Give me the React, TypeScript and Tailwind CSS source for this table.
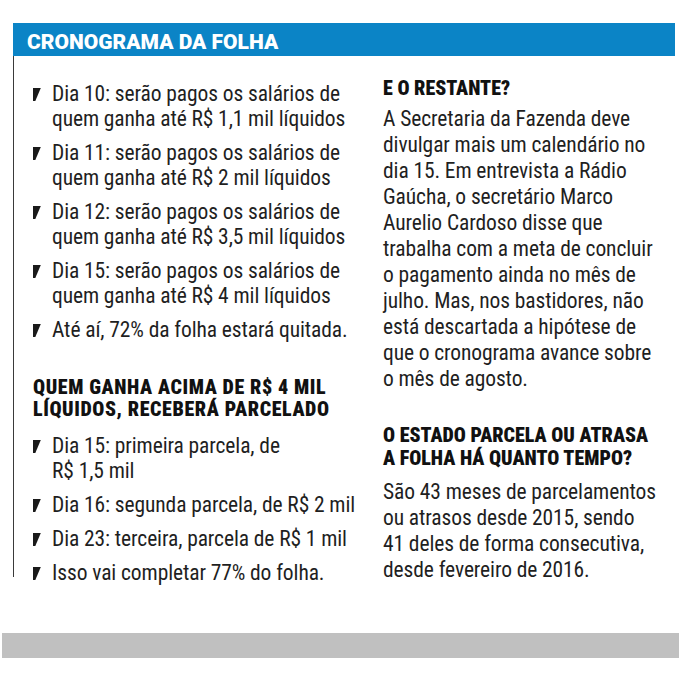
function Bullet() {
  return (
    <svg width="8" height="13" viewBox="0 0 8 13" className="mt-[7px] shrink-0" aria-hidden="true">
      <polygon points="0,0 7.8,0 2.3,13 0,13" fill="#1a1a1a" />
    </svg>
  );
}

function Item({ lines }: { lines: string[] }) {
  return (
    <li className="flex">
      <Bullet />
      <div className="ml-[11px] flex flex-col">
        {lines.map((l) => (
          <span key={l} className="block whitespace-nowrap">
            {l}
          </span>
        ))}
      </div>
    </li>
  );
}

function Lines({ lines }: { lines: string[] }) {
  return (
    <>
      {lines.map((l) => (
        <span key={l} className="block whitespace-nowrap">
          {l}
        </span>
      ))}
    </>
  );
}

export default function App() {
  const body = "font-['Roboto',sans-serif] [font-stretch:condensed] text-[21.5px] tracking-[-0.1px] text-[#1f1f1f]";
  const heading = "font-['Roboto',sans-serif] [font-stretch:condensed] font-black uppercase text-[#111]";
  return (
    <div className="w-[684px] h-[675px] bg-white overflow-hidden">
      <div className="h-[23px]" />
      <div className="ml-[13px] w-[662px] h-[33px] bg-[#0b84c6] flex items-center pl-[14px] pt-[4px]">
        <span className="font-['Roboto',sans-serif] [font-stretch:88%] font-black text-[21px] leading-[26px] tracking-[0px] text-white">
          CRONOGRAMA DA FOLHA
        </span>
      </div>
      <div className="ml-[13px] h-[521px] border-l border-[#3a3a3a] pl-[19px] grid grid-cols-[350px_1fr]">
        <div className="pt-[24.5px]">
          <ul className={`${body} leading-[25px] flex flex-col gap-[9px]`}>
            <Item lines={["Dia 10: serão pagos os salários de", "quem ganha até R$ 1,1 mil líquidos"]} />
            <Item lines={["Dia 11: serão pagos os salários de", "quem ganha até R$ 2 mil líquidos"]} />
            <Item lines={["Dia 12: serão pagos os salários de", "quem ganha até R$ 3,5 mil líquidos"]} />
            <Item lines={["Dia 15: serão pagos os salários de", "quem ganha até R$ 4 mil líquidos"]} />
            <Item lines={["Até aí, 72% da folha estará quitada."]} />
          </ul>
          <h2 className={`${heading} text-[20px] leading-[22.5px] tracking-[0.6px] mt-[34px]`}>
            <Lines lines={["Quem ganha acima de R$ 4 mil", "líquidos, receberá parcelado"]} />
          </h2>
          <ul className={`${body} leading-[25px] flex flex-col gap-[9px] mt-[12px]`}>
            <Item lines={["Dia 15: primeira parcela, de", "R$ 1,5 mil"]} />
            <Item lines={["Dia 16: segunda parcela, de R$ 2 mil"]} />
            <Item lines={["Dia 23: terceira, parcela de R$ 1 mil"]} />
            <Item lines={["Isso vai completar 77% do folha."]} />
          </ul>
        </div>
        <div className="pt-[21px]">
          <h2 className={`${heading} text-[20px] leading-[22px]`}>E o restante?</h2>
          <p className={`${body} leading-[26px] mt-[7px]`}>
            <Lines
              lines={[
                "A Secretaria da Fazenda deve",
                "divulgar mais um calendário no",
                "dia 15. Em entrevista a Rádio",
                "Gaúcha, o secretário Marco",
                "Aurelio Cardoso disse que",
                "trabalha com a meta de concluir",
                "o pagamento ainda no mês de",
                "julho. Mas, nos bastidores, não",
                "está descartada a hipótese de",
                "que o cronograma avance sobre",
                "o mês de agosto.",
              ]}
            />
          </p>
          <h2 className={`${heading} text-[20px] leading-[23px] mt-[32px]`}>
            <Lines lines={["O Estado parcela ou atrasa", "a folha há quanto tempo?"]} />
          </h2>
          <p className={`${body} leading-[26.3px] mt-[8.5px]`}>
            <Lines
              lines={[
                "São 43 meses de parcelamentos",
                "ou atrasos desde 2015, sendo",
                "41 deles de forma consecutiva,",
                "desde fevereiro de 2016.",
              ]}
            />
          </p>
        </div>
      </div>
      <div className="mt-[56px] ml-[2px] w-[677px] h-[25px] bg-[#c0c0c0]" />
    </div>
  );
}
